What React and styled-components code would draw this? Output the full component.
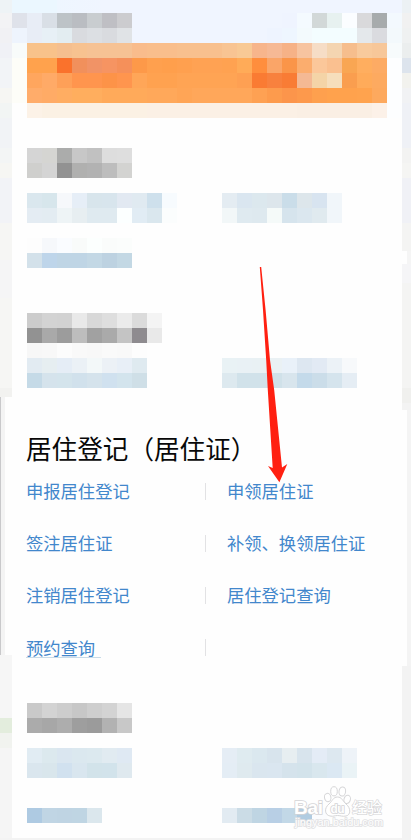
import React from "react";
import styled, { createGlobalStyle } from "styled-components";

// One string per mosaic row, 15px per cell. "color*3" repeats, "-" is an empty cell.
const statusRows = [
  "dfe2ea e8edf6 d9dfe6 bdc3c7 babdc2 c9cdd0 bfbfc4 cccccf -*10 eff4ff f4faff d2d8d8 e7f1f0 fbfdff d9d9db a7abac f3f9fe",
  "eef4fd e8edf6 e7f0f6 e3edf1 d9dbdf dcdfe3 d9dbdf e0e3e6 -*9 eef4ff eef6ff f3fafd f3fdff*3 e4e8eb dadbdf f3f9fc",
];

const bannerRows = [
  "f8fbfa f8c28a*2 f5bf8f f7c290 f6c294*3 f9bc8c f9be8c*2 f8c08e*3 f8c493 f8c995 f7b58c f6b995 f6b287 f7c4a0 f6ddc6 f4d5b1 f6be8d f8ca9c f7c799 f7fbfc",
  "fdfdf8 ffa24d*2 fa722c f1905c f19366 f69462 f5905a fd9949 ffa04e ff9f4c ffa04f ffa253*2 ffa251 ffab58 ff8e3d faa568 fa9549 fbad6e fbc79a fac090 f9a653 ffae5f fdab64 fdfeff",
  "fdfdf8 ffa65e ffaa67 fea058 ff954e*2 fd9348 ff954e ffa658 ffa250*2 ffa454*4 fea053 fa7b33 f8813e f97c35 f4b994 f4d4a7 f6debc fa9e4f ffab5a fdaa60 fdfeff",
  "fdfdf8 ffac6a ffab66 ffad62 ffae5e*2 ffaa5a*3 ffa85a*2 ffa556 ffa75a*4 fea153 fd9b4d fc954b fd994c fea04e ffa24d*2 ffa34e fda95e fdfeff",
  "- fcf2e7 fbf1e4*7 fbf0e5*10 faefe4*5 fcf1e8 fdfeff",
];

const firstTitle = [
  "- d5d5d5 d5d5d2 abacab c7c7c7 c1c1c1 dddddd dedede",
  "- cfcfcd d4d4d4 929292 b0b0af b2b2b2 bdbdbd d3d3d1",
];

const firstLinks = [
  "- dae7ee d7e6ec f6f8fb e6eef7 d8e5ec d8e5ed e2e9f2 e0eaf1 cee0ec f7fbfe -*3 e4ecf2 dae6f0 dce8ee dde6ec cadde9 dde6eb d8e4f0 f1f6fa",
  "- e4ecf3 e3ecf2 eef4f6 e7eef1 dfeaf0*2 fcffff e1ecf4 dae7ee fbfdfd -*3 f2f7f8 dfeaf0 dee9ef f5faf9 d6e4ed dbe7ef e0eaef f1f6fa",
  "-",
  "- fdfdfd f6f8fb fafcff f9fbfa fcfffe fafcfb fbfdfc",
  "- d3e1ea bed5ea bfd5e5*2 c3d8e5 bdd2e1 c3d8e4",
];

const secondTitle = [
  "- cccccc d3d3d3 d2d2d2 e9e9e9 d8d8d8 dedede ebebeb dbdbdb f4f4f4",
  "- 929292 a9a9a9 9c9c9c bdbdbd a1a1a1 aaaaaa c4c4c4 8e8b8f e9e9e9",
  "- f7f7f7 f8f8f8 fcfcfc f9f9f9 f8f8f8 fafafa f9f9f9 fdfdfd",
];

const secondLinks = [
  "- e2ebf2 e6eef1 e5edf6 ebf1f6 f3f8f9 ecf1f6 e8eff7 dfeaf0 -*5 e9f2f5 e9f1f5 e9f1f4 eaf1f4 e9f1f9 dde7f1 e2eaf4 ecf2f7 f7f9fb",
  "- c5dae7 d5e3ec d4e4ec d1e1ec d5e3ec d0e1ef d3e4ed cfdfe7 -*5 dde9ef d1e2ea*2 d0e1e9 d8e5ed c4daea cbdde9 d5e4ed e5edf4",
];

const lastTitle = [
  "- c9c9c9 d3d3d3 cdcdcd c7c7c7 cecece d3d3d3 e5e5e5",
  "- ababab a7a7a7 adadad 9e9e9e 9b9b9b b2b2b2 c8c8c8",
];

const lastLinks = [
  "- e1ecf3 dce9ee dae6f0 dbe8ef dce9ef e1ebf1 dfe9f3 -*6 e5edf5 dfebf0 dbe8ef d8e4ed e7eef1 d8e4ed e4ecf6 dde8f0 eef3f8",
  "- dae6ee d9e6ec d1e1ef d9e6ef d2e3ea d2e3eb dfe9ef -*6 e4edf5 dfeaef dae6ef dae6f0 d5e3ec d3e3eb d9e7ee dbe8f3 eaf3f6",
  "-*2",
  "-",
  "- aecae2 c0d5e4 bfd4e3 bfd5e3 dbe7ed -*8 e2ebf2 cbdce6 bfd5e3 b8cfe5 c2d8e7 b1cce1 fbfcfe",
];

// [height, color, width]
const leftEdge = [
  [13, "#eef3f6"], [15, "#f3f3f5"], [15, "#f1f1f4"], [15, "#f0f1f6"],
  [30, "#f2f4f7"], [15, "#f6f6f3"], [15, "#f2f5f4"], [30, "#f1f3f6"],
  [15, "#f3f5f5"], [15, "#f6f6f3"], [45, "#f2f3f7"], [37, "#f6f6f4"],
  [38, "#f5f5f6"], [90, "#f6f6f4"], [9, "#f2f2f0"], [258, "#f4f4f4", 5],
  [63, "#f6f6f6"], [15, "#e3eddd"], [15, "#f1f3ef"], [90, "#f5f5f5"],
];

const rightEdge = [
  [13, "#ecf1f4"], [15, "#f1f1f1"], [15, "#eff1f1"], [15, "#ebeeee"],
  [15, "#dde4ed"], [15, "#f2f2ee"], [15, "#f1f2f4"], [45, "#eff1f6"],
  [15, "#f3f3f2"], [15, "#f5f5f3"], [45, "#f0f1f6"], [28, "#f4f4f3"],
  [13, "#f5f5f5", 4], [19, "#f5f5f7"], [105, "#f4f4f3"], [15, "#f0f0ee"],
  [7, "#f3f3f3"], [256, "#f4f4f4", 4], [172, "#f3f3f3"],
];

const links = [
  ["申报居住登记", "申领居住证"],
  ["签注居住证", "补领、换领居住证"],
  ["注销居住登记", "居住登记查询"],
  ["预约查询", ""],
];

const toCells = (row) =>
  row.split(" ").map((part) => {
    const [color, count = "1"] = part.split("*");
    return { color: color === "-" ? "transparent" : `#${color}`, span: Number(count) };
  });

const Mosaic = ({ rows, gap = 0 }) => (
  <MosaicBlock $gap={gap}>
    {rows.map((row, i) => (
      <MosaicRow key={i}>
        {toCells(row).map((cell, j) => (
          <Cell key={j} $color={cell.color} $span={cell.span} />
        ))}
      </MosaicRow>
    ))}
  </MosaicBlock>
);

const Arrow = () => (
  <ArrowSvg width="30" height="220" viewBox="0 0 30 220">
    <path
      d="M1.8 2 L3.2 2 L7.6 45 L12 95 L16.2 125 L24 202.5 L29.3 199 L21.4 217.3 L10 201 L14.7 203 L9.8 125 L8.2 95 L5 45 Z"
      fill="#ff2011"
    />
  </ArrowSvg>
);

const Watermark = () => (
  <WatermarkSvg width="94" height="48" viewBox="0 0 94 48">
    <g fill="#fff" stroke="#d6d6d8" strokeWidth="1">
      <ellipse cx="35.7" cy="15.5" rx="3.2" ry="4.2" transform="rotate(-12 35.7 15.5)" />
      <ellipse cx="42" cy="9.3" rx="3.3" ry="4.6" />
      <ellipse cx="50.3" cy="9.5" rx="3.3" ry="4.6" transform="rotate(8 50.3 9.5)" />
      <ellipse cx="55.2" cy="17.4" rx="3.2" ry="4.2" transform="rotate(15 55.2 17.4)" />
      <path d="M45.5 15 C41 15 40.5 19 37 22 C32 26 32.5 33 38 34 C42 34.8 42 33.5 45.5 33.5 C49 33.5 50 34.8 54 34 C59 33 59 26 54 22 C50.5 19 50 15 45.5 15Z" />
    </g>
    <g stroke="#d4d4d6" strokeWidth="1.6" paintOrder="stroke" fill="#fff">
      <text x="2" y="32" fontSize="19" fontWeight="700" textLength="29">Bai</text>
      <text x="38.5" y="30.5" fontSize="12" fontWeight="700" textLength="14">du</text>
      <text x="60" y="31" fontSize="15" fontWeight="500" textLength="30" strokeWidth="1.2">经验</text>
    </g>
    <text
      x="3" y="44" fontSize="10" textLength="88" lengthAdjust="spacingAndGlyphs"
      stroke="#e1e1e3" strokeWidth="1.6" paintOrder="stroke" fill="#fff"
    >
      jingyan.baidu.com
    </text>
  </WatermarkSvg>
);

const App = () => (
  <>
    <GlobalStyle />
    <Screen>
      <Edge $width={12}>
        {leftEdge.map(([height, color, width], i) => (
          <Strip key={i} $height={height} $color={color} $width={width} $line={Boolean(width)} />
        ))}
      </Edge>

      <Main>
        <StatusBar>
          <Mosaic rows={statusRows} />
        </StatusBar>
        <Mosaic rows={bannerRows} />
        <Mosaic rows={firstTitle} gap={30} />
        <Mosaic rows={firstLinks} gap={15} />
        <Mosaic rows={secondTitle} gap={45} />
        <Mosaic rows={secondLinks} />

        <Permit>
          <PermitTitle>居住登记（居住证）</PermitTitle>
          {links.map(([left, right], i) => (
            <LinkRow key={left}>
              <LinkCell $underlined={i === 3}>{left}</LinkCell>
              <Divider />
              <LinkCell>{right}</LinkCell>
            </LinkRow>
          ))}
        </Permit>

        <Mosaic rows={lastTitle} />
        <Mosaic rows={lastLinks} gap={15} />
      </Main>

      <Edge $width={9} $right>
        {rightEdge.map(([height, color, width], i) => (
          <Strip key={i} $height={height} $color={color} $width={width} />
        ))}
      </Edge>

      <Arrow />
      <Watermark />
      <BottomLine />
    </Screen>
  </>
);

const GlobalStyle = createGlobalStyle`
  * {
    box-sizing: border-box;
  }
  body {
    margin: 0;
    background: #fefefe;
    font-family: "Noto Sans CJK SC", "Liberation Sans", sans-serif;
  }
`;

const Screen = styled.div`
  position: relative;
  display: flex;
  width: 411px;
  height: 840px;
  overflow: hidden;
  background: #fefefe;
`;

const Edge = styled.div`
  display: flex;
  flex: none;
  flex-direction: column;
  align-items: ${({ $right }) => ($right ? "flex-end" : "flex-start")};
  width: ${({ $width }) => $width}px;
`;

const Strip = styled.div`
  flex: none;
  width: ${({ $width }) => ($width ? `${$width}px` : "100%")};
  height: ${({ $height }) => $height}px;
  background: ${({ $color }) => $color};
  border-left: ${({ $line }) => ($line ? "1px solid #c9c9cb" : "none")};
`;

const Main = styled.main`
  display: flex;
  flex-direction: column;
  width: 390px;
`;

const StatusBar = styled.header`
  padding-top: 13px;
  background: linear-gradient(90deg, #ebf7ff 45px, #eef6ff 45px, #f0f5ff 90px);
`;

const MosaicBlock = styled.div`
  flex: none;
  margin-top: ${({ $gap }) => $gap}px;
`;

const MosaicRow = styled.div`
  display: flex;
  height: 15px;
`;

const Cell = styled.span`
  flex: none;
  width: ${({ $span }) => $span * 15}px;
  background: ${({ $color }) => $color};
`;

const Permit = styled.section`
  flex: none;
  height: 315px;
  padding: 40px 0 0 14px;
`;

const PermitTitle = styled.h2`
  margin: 0;
  height: 37px;
  font-size: 25.6px;
  font-weight: 400;
  line-height: 40px;
  color: #080808;
  white-space: nowrap;
`;

const LinkRow = styled.div`
  display: grid;
  grid-template-columns: 179px 1px 1fr;
  align-items: center;
  height: 52px;
`;

const LinkCell = styled.a`
  justify-self: start;
  height: 26px;
  font-size: 17.3px;
  line-height: 26px;
  color: #4287cc;
  white-space: nowrap;

  ${LinkRow} > & + span + & {
    margin-left: 21px;
  }

  ${({ $underlined }) =>
    $underlined &&
    `
    height: 21px;
    padding-right: 6px;
    line-height: 21px;
    border-bottom: 1px solid #c8dbe8;
  `}
`;

const Divider = styled.span`
  width: 1px;
  height: 17px;
  background: #e2e2e4;
`;

/* Drawn over the sections */
const ArrowSvg = styled.svg`
  position: absolute;
  top: 265px;
  left: 258px;
`;

const WatermarkSvg = styled.svg`
  position: absolute;
  top: 782px;
  left: 292px;
  font-family: "Liberation Sans", "Noto Sans CJK SC", sans-serif;
`;

const BottomLine = styled.div`
  position: absolute;
  bottom: 0;
  left: 0;
  width: 100%;
  height: 2px;
  background: #f3f3f3;
`;

export default App;
